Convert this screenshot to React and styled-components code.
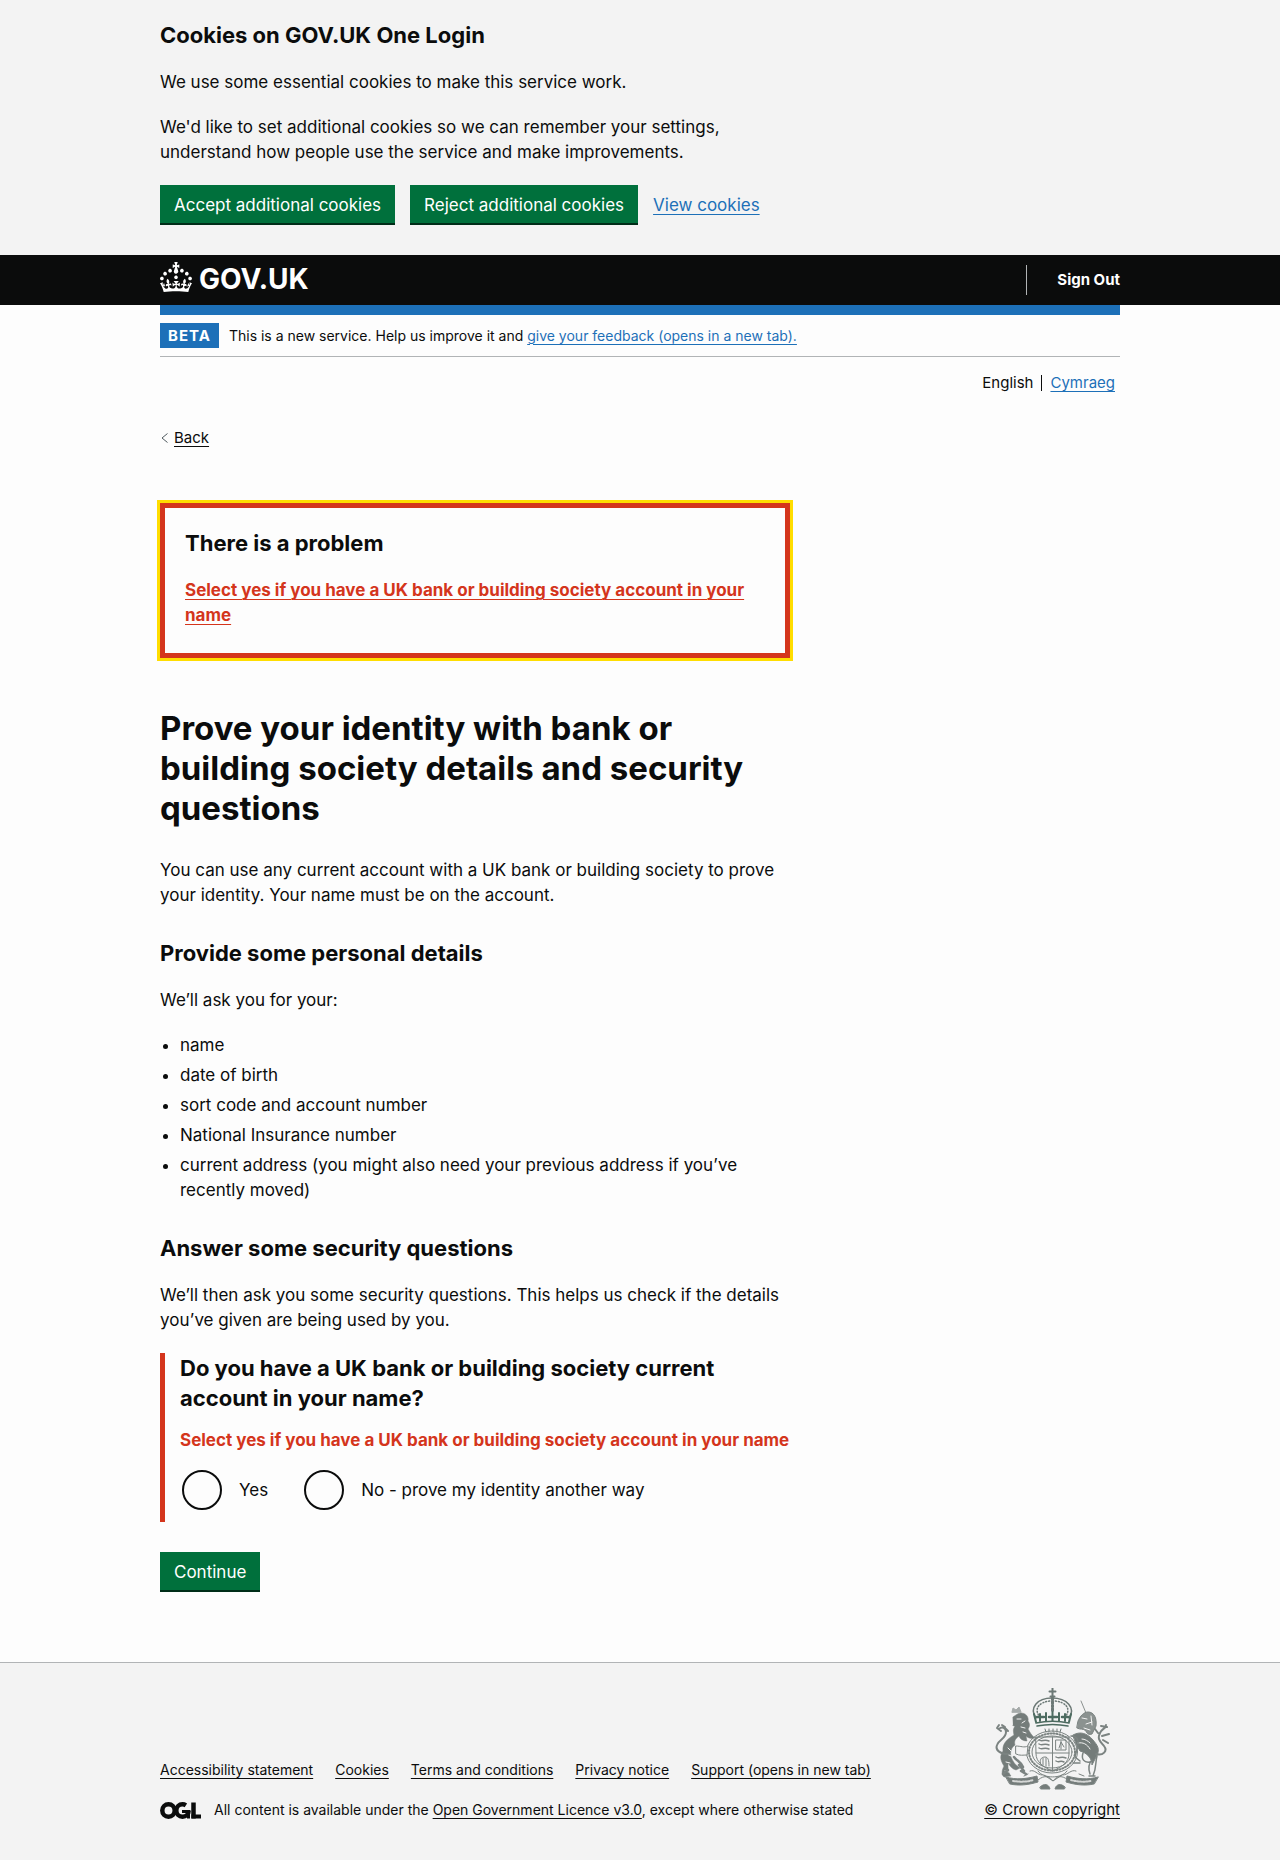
import React from "react";
import styled, { createGlobalStyle } from "styled-components";

const color = {
  text: "#0b0c0c",
  page: "#fdfdfd",
  panel: "#f3f3f3",
  link: "#1d70b8",
  green: "#00703c",
  greenShadow: "#002d18",
  error: "#d4351c",
  focus: "#ffdd00",
  border: "#b1b4b6",
};

const GlobalStyle = createGlobalStyle`
  *, *::before, *::after { box-sizing: border-box; }
  body {
    margin: 0;
    background: ${color.page};
    color: ${color.text};
    font-family: Inter, "Liberation Sans", sans-serif;
    font-size: 17px;
    line-height: 25px;
    -webkit-font-smoothing: antialiased;
  }
`;

const Container = styled.div`
  max-width: 960px;
  margin: 0 auto;

  @media (max-width: 1020px) {
    margin: 0 30px;
  }
`;

const TwoThirds = styled.div`
  max-width: 630px;
`;

const Link = styled.a`
  color: ${(p) => (p.$tone === "blue" ? color.link : p.$tone === "error" ? color.error : color.text)};
  font-weight: ${(p) => (p.$tone === "error" ? 700 : 400)};
  text-decoration: underline;
  text-decoration-thickness: 1px;
  text-underline-offset: 3px;
`;

const Title = styled.h1`
  margin: 0 0 30px;
  font-size: 33px;
  line-height: 40px;
  font-weight: 700;
`;

const Heading = styled.h2`
  margin: 0 0 20px;
  padding-top: ${(p) => (p.$spaced ? "10px" : "0")};
  font-size: 22px;
  line-height: 30px;
  font-weight: 700;
`;

const Paragraph = styled.p`
  margin: 0 0 20px;
`;

const BulletList = styled.ul`
  margin: 0 0 20px;
  padding-left: 20px;
`;

const Bullet = styled.li`
  margin-bottom: 5px;
`;

const Button = styled.button`
  display: block;
  height: 40px;
  padding: 0 14px;
  border: 0;
  border-radius: 0;
  background: ${color.green};
  box-shadow: inset 0 -2px 0 ${color.greenShadow};
  color: #fff;
  font: inherit;
  cursor: pointer;
`;

/* Cookie banner */

const CookieBanner = styled.section`
  padding: 20px 0 30px;
  background: ${color.panel};
`;

const ButtonRow = styled.div`
  display: flex;
  flex-wrap: wrap;
  align-items: center;
  gap: 15px;
`;

/* Header */

const Header = styled.header`
  background: ${color.text};
  color: #fff;
`;

const HeaderInner = styled.div`
  display: flex;
  justify-content: space-between;
  align-items: center;
  min-height: 50px;
`;

const Logo = styled.a`
  display: flex;
  align-self: flex-start;
  gap: 7px;
  padding-top: 7px;
  color: #fff;
  font-size: 28px;
  line-height: 34px;
  font-weight: 700;
  text-decoration: none;
`;

const HeaderNav = styled.nav`
  display: flex;
  align-items: center;
  height: 30px;
  padding-left: 30px;
  border-left: 1px solid ${color.border};
`;

const HeaderLink = styled.a`
  color: #fff;
  font-size: 15px;
  line-height: 20px;
  font-weight: 700;
  text-decoration: none;
`;

const PhaseBanner = styled.div`
  display: flex;
  align-items: center;
  gap: 10px;
  padding: 8px 0;
  border-top: 10px solid ${color.link};
  border-bottom: 1px solid ${color.border};
  font-size: 14px;
  line-height: 20px;
`;

const PhaseTag = styled.strong`
  padding: 0 8px;
  background: ${color.link};
  color: #fff;
  font-size: 15px;
  line-height: 25px;
  letter-spacing: 1px;
`;

const LanguageNav = styled.nav`
  display: flex;
  justify-content: flex-end;
  gap: 8px;
  padding: 16px 5px 0 0;
  font-size: 15px;
  line-height: 20px;
`;

const LanguageDivider = styled.span`
  width: 1px;
  height: 16px;
  margin-top: 2px;
  background: ${color.text};
`;

const BackRow = styled.div`
  display: flex;
  align-items: center;
  gap: 5px;
  padding: 35px 0 55px;
  font-size: 15px;
  line-height: 20px;
`;

/* Error summary */

const ErrorSummary = styled.div`
  margin-bottom: 50px;
  padding: 20px 20px 25px;
  border: 5px solid ${color.error};
  outline: 3px solid ${color.focus};
`;

/* Question */

const FormGroup = styled.div`
  margin-bottom: 30px;
  padding: 0 0 10px 15px;
  border-left: 5px solid ${color.error};
`;

const Fieldset = styled.fieldset`
  min-width: 0;
  margin: 0;
  padding: 0;
  border: 0;
`;

const Legend = styled.legend`
  width: 100%;
  margin: 0 0 15px;
  padding: 0;
  font-size: 22px;
  line-height: 30px;
  font-weight: 700;
`;

const ErrorMessage = styled.p`
  margin: 0 0 15px;
  color: ${color.error};
  font-weight: 700;
`;

const RadioRow = styled.div`
  display: flex;
  flex-wrap: wrap;
  gap: 36px;
  padding: 2px;
`;

const RadioItem = styled.div`
  display: flex;
  align-items: center;
  gap: 17px;
`;

const Radio = styled.input`
  appearance: none;
  width: 40px;
  height: 40px;
  margin: 0;
  border: 2px solid ${color.text};
  border-radius: 50%;
  background: transparent;
  cursor: pointer;

  &:checked {
    background: radial-gradient(${color.text} 10px, transparent 11px);
  }
`;

/* Footer */

const Footer = styled.footer`
  margin-top: 70px;
  padding: 25px 0 40px;
  border-top: 1px solid ${color.border};
  background: ${color.panel};
  font-size: 14px;
  line-height: 20px;
`;

const FooterInner = styled.div`
  display: flex;
  flex-wrap: wrap;
  justify-content: space-between;
  align-items: flex-end;
  gap: 30px;
`;

const FooterMeta = styled.div`
  display: flex;
  flex-direction: column;
  gap: 20px;
`;

const FooterLinks = styled.ul`
  display: flex;
  flex-wrap: wrap;
  gap: 0 22px;
  margin: 0;
  padding: 0;
  list-style: none;
`;

const Licence = styled.div`
  display: flex;
  align-items: center;
  gap: 13px;
`;

const Copyright = styled.div`
  display: flex;
  flex-direction: column;
  align-items: center;
  gap: 10px;
  font-size: 15px;
`;

const CrownIcon = () => (
  <svg width="32" height="30" viewBox="0 0 32 30" fill="currentColor" aria-hidden="true">
    <path d="M22.6 10.4c-1 .4-2-.1-2.4-1-.4-.9.1-2 1-2.4.9-.4 2 .1 2.4 1s-.1 2-1 2.4m-5.9 6.7c-.9.4-2-.1-2.4-1-.4-.9.1-2 1-2.4.9-.4 2 .1 2.4 1s-.1 2-1 2.4m10.8-3.7c-1 .4-2-.1-2.4-1-.4-.9.1-2 1-2.4.9-.4 2 .1 2.4 1s0 2-1 2.4m3.3 4.8c-1 .4-2-.1-2.4-1-.4-.9.1-2 1-2.4.9-.4 2 .1 2.4 1s-.1 2-1 2.4M17 4.7l2.3 1.2V2.5l-2.3.7-.2-.2.9-3h-3.4l.9 3-.2.2c-.1.1-2.3-.7-2.3-.7v3.4L15 4.7c.1.1.1.2.2.2l-1.3 4c-.1.2-.1.4-.1.6 0 1.1.8 2 1.9 2.2h.7c1-.2 1.9-1.1 1.9-2.1 0-.2 0-.4-.1-.6l-1.3-4c-.1-.2 0-.2.1-.3m-7.6 5.7c.9.4 2-.1 2.4-1 .4-.9-.1-2-1-2.4-.9-.4-2 .1-2.4 1s0 2 1 2.4m-5 3c.9.4 2-.1 2.4-1 .4-.9-.1-2-1-2.4-.9-.4-2 .1-2.4 1s.1 2 1 2.4m-3.2 4.8c.9.4 2-.1 2.4-1 .4-.9-.1-2-1-2.4-.9-.4-2 .1-2.4 1s0 2 1 2.4m14.8 11c4.4 0 8.6.3 12.3.8 1.1-4.5 2.4-7 3.7-8.8l-2.5-.9c.2 1.3.3 1.9 0 2.7-.4-.4-.8-1.1-1.1-2.3l-1.2 4c.7-.5 1.3-.8 2-.9-1.1 2.5-2.6 3.1-3.5 3-1.1-.2-1.7-1.2-1.5-2.1.3-1.2 1.5-1.5 2.1-.1 1.1-2.3-.8-3-2-2.3 1.9-1.9 2.1-3.5.6-5.6-2.1 1.6-2.1 3.2-1.2 5.5-1.2-1.4-3.2-.6-2.5 1.6.9-1.4 2.1-.5 1.9.8-.2 1.1-1.7 2.1-3.5 1.9-2.7-.2-2.9-2.1-2.9-3.6.7-.1 1.9.5 2.9 1.9l.4-4.3c-1.1 1.1-2.1 1.4-3.2 1.4.4-1.2 2.1-3 2.1-3h-5.4s1.7 1.9 2.1 3c-1.1 0-2.1-.2-3.2-1.4l.4 4.3c1-1.4 2.2-2 2.9-1.9-.1 1.5-.2 3.4-2.9 3.6-1.9.2-3.4-.8-3.5-1.9-.2-1.3 1-2.2 1.9-.8.7-2.3-1.2-3-2.5-1.6.9-2.2.9-3.9-1.2-5.5-1.5 2-1.3 3.7.6 5.6-1.2-.7-3.1 0-2 2.3.6-1.4 1.8-1.1 2.1.1.2.9-.3 1.9-1.5 2.1-.9.2-2.4-.5-3.5-3 .6 0 1.2.3 2 .9l-1.2-4c-.3 1.1-.7 1.9-1.1 2.3-.3-.8-.2-1.4 0-2.7l-2.9.9C1.3 23 2.6 25.5 3.7 30c3.7-.5 7.9-.8 12.3-.8" />
  </svg>
);

/* Open Government Licence mark: two overlapping rings and a corner bar */
const LicenceMark = () => (
  <svg width="41" height="17" viewBox="0 0 41 17" fill="none" stroke={color.text} strokeWidth="4.500" role="img" aria-label="Open Government Licence">
    <circle cx="8.5" cy="8.5" r="6.2" />
    <circle cx="22.5" cy="8.5" r="6.2" strokeDasharray="32 7" />
    <line x1="22" y1="9.5" x2="30" y2="9.5" strokeWidth="3" />
    <line x1="28.500" y1="8" x2="28.500" y2="16.500" strokeWidth="3" />
    <line x1="33.500" y1="0.5" x2="33.500" y2="16.500" />
    <line x1="31.500" y1="14.500" x2="41" y2="14.500" strokeWidth="4" />
  </svg>
);

const RoyalArms = () => (
  <svg width="116" height="102" viewBox="0 0 116 102" fill="none" stroke="#7b8381" strokeLinecap="round" strokeLinejoin="round" aria-hidden="true">
    {/* crown */}
    <g stroke="#6b7875">
      <path d="M58.500 0v9M55.500 3.500h6M56.500 8.500h4" strokeWidth="2" />
      <path d="M42 30C35 20 43 10 58 10s24 10 17 20" strokeWidth="1.500" />
      <path d="M44.500 27C40 19 47 13.500 57 13M72.500 27C77 19 70 13.500 60 13" strokeWidth="1.500" strokeDasharray="1 2" />
      <path d="M58.500 10v14" strokeWidth="3" strokeDasharray="2 1.500" />
      <path d="M40 26l2 8M77 26l-2 8M46 26v7M71 26v7M52 25v8M65 25v8M58.500 24v9" strokeWidth="2" stroke="#4d6b60" />
      <path d="M43 29h7M55 29h8M68 29h6" strokeWidth="2.500" stroke="#4d6b60" />
      <path d="M42 35c10-2 23-2 33 0M43 38c10-2 21-2 31 0" strokeWidth="1.500" stroke="#4d6b60" />
      <path d="M51 41l1 3M55 41v3M59 41v3M63 41v3M67 41l-1 3" />
    </g>
    {/* garter and shield */}
    <ellipse cx="58" cy="64" rx="25.500" ry="21" strokeWidth="1" />
    <ellipse cx="58" cy="64" rx="23" ry="18.500" strokeWidth="2" strokeDasharray="1 2" />
    <ellipse cx="58" cy="64" rx="20" ry="16" strokeWidth="1" />
    <path d="M42 49h33v17c0 8-7 13-16.500 17C49 79 42 74 42 66zM58.500 49v34M42 65h33" strokeWidth="1" />
    <path d="M45 52c3 2 5-1 10 1M45 56c3 2 5-1 10 1M45 60c3 2 5-1 10 1M62 69c3 2 5-1 10 1M62 73c3 2 4-1 8 1" strokeWidth="1.500" />
    <path d="M62 52h10v10H62zM65 60l2-6 3 5M67 53v8M47 77c-2-5 0-8 4-8 3 0 4 3 4 9M49 70v7M52 70v8" strokeWidth="1" />
    {/* lion */}
    <g fill="#747c7a">
      <path d="M19 29c3-2 5-4 8-4 5 0 8 4 7 8 2 3 2 5 0 8 2 3 3 6 7 9-4 1-7 0-9-2l1 5c-4 0-7-2-8-5-4 3-5 5-4 9-4 3-5 7-4 12 2 4 3 7 9 11l-4 2c-4-1-6-4-8-7 0 6 0 9 3 13l-7 1c-3-3-2-7 0-11-3-5-5-9-1-15-1-7 4-12 11-16-1-4-1-6 1-9-2 0-3-1-2-1z" strokeWidth=".5" />
      <path d="M18 24l1-4 3 2 3-3 2 5z" fill="#a6abaa" stroke="#a6abaa" strokeWidth="1" />
    </g>
    <path d="M22 58c5 0 8 2 12 0l-1 9c-4 0-7 1-11-1z" fill={color.panel} strokeWidth="1" />
    <path d="M23 31h4M28 35l3-2M27 39l4 1M29 44l3 1M14 60l3 3M13 66l4 2M12 74l4 1M11 83l4 1" stroke={color.panel} strokeWidth="1" />
    <path d="M14 66C6 66 1 62 3 57c2-6 9-6 9-13 0-4-4-6-7-3M5 37l-2 3 4 3M14 43l-4-4M8 37l3 2" strokeWidth="2" />
    <path d="M20 69c3 4 7 5 9 10M25 77l5 6M14 82l-5 4M27 83l5 3" strokeWidth="2.500" />
    {/* unicorn */}
    <path d="M87 13l5 12" strokeWidth="1" stroke="#8b918f" />
    <path d="M84 33c2-5 6-9 10-9 6 0 9 6 8 14l-4 8c-3 1-5 0-6-3-3-3-6-1-9-3z" fill="#8b9290" strokeWidth="1" />
    <path d="M88 30l5 1M92 36l6-2M97 28l1 9M90 40l6 2" stroke={color.panel} strokeWidth="1" />
    <path d="M79 47c7-4 14-2 20 5 4 5 8 9 3 17l-4 8c0-7-5-12-12-14l-4-7z" fill="#747c7a" strokeWidth="1" />
    <path d="M84 55c5-1 9 1 12 6M88 51c3 0 6 2 8 4" stroke={color.panel} strokeWidth="1" />
    <path d="M77 48c6 0 8 4 7 9M84 57l-3 12 5 4M89 65c-2 6 1 10 7 9M98 72c-4 4-4 8-2 14M103 68c-2 7 0 10-4 20M79 75h7M95 88h6" strokeWidth="1.500" />
    <path d="M102 66c7 2 12-3 8-8-4-5-7-7-4-13 1-4 6-4 6-8M113 39l-6-1M104 45l-3-4M115 46l-7 2M114 55l-5-3" strokeWidth="2" />
    {/* motto scroll and compartment */}
    <path d="M12 89c10 3 20 2 31-1l1 6c-10 3-19 4-28 2zM104 89c-10 3-20 2-31-1l-1 6c10 3 19 4 28 2z" fill="#747c7a" strokeWidth="1" />
    <path d="M19 93c7 1 14 1 20-1M77 92c7 2 14 2 20 1" stroke="#d4d6d5" strokeWidth="2" strokeDasharray="1.500 1.500" />
    <path d="M36 83c5-2 7 4 12 4M82 83c-5-2-8 4-13 4M44 83c5 8 24 8 29 0M44 92c7-6 12-3 15 1 3-4 8-7 15-1M50 87l9 6 9-6M34 86l-4 2M85 86l5 2" strokeWidth="1" />
    <path d="M46 99c4-4 9-3 10 2H47zM71 99c-4-4-9-3-10 2h9z" fill="#747c7a" strokeWidth="1" />
  </svg>
);

const BackChevron = () => (
  <svg width="9" height="12" viewBox="0 0 9 12" fill="none" stroke="#505a5f" strokeWidth="1" aria-hidden="true">
    <path d="M7.500 1.500L2 6l5.500 4.500" />
  </svg>
);

const details = [
  "name",
  "date of birth",
  "sort code and account number",
  "National Insurance number",
  "current address (you might also need your previous address if you’ve recently moved)",
];

const footerLinks = [
  "Accessibility statement",
  "Cookies",
  "Terms and conditions",
  "Privacy notice",
  "Support (opens in new tab)",
];

export default function App() {
  return (
    <>
      <GlobalStyle />
      <CookieBanner aria-label="Cookies on GOV.UK One Login">
        <Container>
          <TwoThirds>
            <Heading>Cookies on GOV.UK One Login</Heading>
            <Paragraph>We use some essential cookies to make this service work.</Paragraph>
            <Paragraph>
              We'd like to set additional cookies so we can remember your settings, understand how
              people use the service and make improvements.
            </Paragraph>
          </TwoThirds>
          <ButtonRow>
            <Button type="button">Accept additional cookies</Button>
            <Button type="button">Reject additional cookies</Button>
            <Link href="#cookies" $tone="blue">View cookies</Link>
          </ButtonRow>
        </Container>
      </CookieBanner>

      <Header>
        <Container>
          <HeaderInner>
            <Logo href="#home">
              <CrownIcon />
              GOV.UK
            </Logo>
            <HeaderNav aria-label="Account">
              <HeaderLink href="#sign-out">Sign Out</HeaderLink>
            </HeaderNav>
          </HeaderInner>
        </Container>
      </Header>

      <Container>
        <PhaseBanner>
          <PhaseTag>BETA</PhaseTag>
          <span>
            This is a new service. Help us improve it and{" "}
            <Link href="#feedback" $tone="blue">give your feedback (opens in a new tab).</Link>
          </span>
        </PhaseBanner>
        <LanguageNav aria-label="Language">
          <span>English</span>
          <LanguageDivider />
          <Link href="#cymraeg" lang="cy" $tone="blue">Cymraeg</Link>
        </LanguageNav>
        <BackRow>
          <BackChevron />
          <Link href="#back">Back</Link>
        </BackRow>

        <TwoThirds as="main">
          <ErrorSummary role="alert">
            <Heading>There is a problem</Heading>
            <Link href="#account-yes" $tone="error">
              Select yes if you have a UK bank or building society account in your name
            </Link>
          </ErrorSummary>

          <Title>Prove your identity with bank or building society details and security questions</Title>
          <Paragraph>
            You can use any current account with a UK bank or building society to prove your
            identity. Your name must be on the account.
          </Paragraph>

          <Heading $spaced>Provide some personal details</Heading>
          <Paragraph>We’ll ask you for your:</Paragraph>
          <BulletList>
            {details.map((item) => (
              <Bullet key={item}>{item}</Bullet>
            ))}
          </BulletList>

          <Heading $spaced>Answer some security questions</Heading>
          <Paragraph>
            We’ll then ask you some security questions. This helps us check if the details you’ve
            given are being used by you.
          </Paragraph>

          <form onSubmit={(e) => e.preventDefault()}>
            <FormGroup>
              <Fieldset aria-describedby="account-error">
                <Legend>Do you have a UK bank or building society current account in your name?</Legend>
                <ErrorMessage id="account-error">
                  Select yes if you have a UK bank or building society account in your name
                </ErrorMessage>
                <RadioRow>
                  <RadioItem>
                    <Radio type="radio" id="account-yes" name="account" value="yes" />
                    <label htmlFor="account-yes">Yes</label>
                  </RadioItem>
                  <RadioItem>
                    <Radio type="radio" id="account-no" name="account" value="no" />
                    <label htmlFor="account-no">No - prove my identity another way</label>
                  </RadioItem>
                </RadioRow>
              </Fieldset>
            </FormGroup>
            <Button type="submit">Continue</Button>
          </form>
        </TwoThirds>
      </Container>

      <Footer>
        <Container>
          <FooterInner>
            <FooterMeta>
              <FooterLinks>
                {footerLinks.map((label) => (
                  <li key={label}>
                    <Link href="#footer">{label}</Link>
                  </li>
                ))}
              </FooterLinks>
              <Licence>
                <LicenceMark />
                <span>
                  All content is available under the{" "}
                  <Link href="#licence">Open Government Licence v3.0</Link>, except where otherwise
                  stated
                </span>
              </Licence>
            </FooterMeta>
            <Copyright>
              <RoyalArms />
              <Link href="#copyright">© Crown copyright</Link>
            </Copyright>
          </FooterInner>
        </Container>
      </Footer>
    </>
  );
}
